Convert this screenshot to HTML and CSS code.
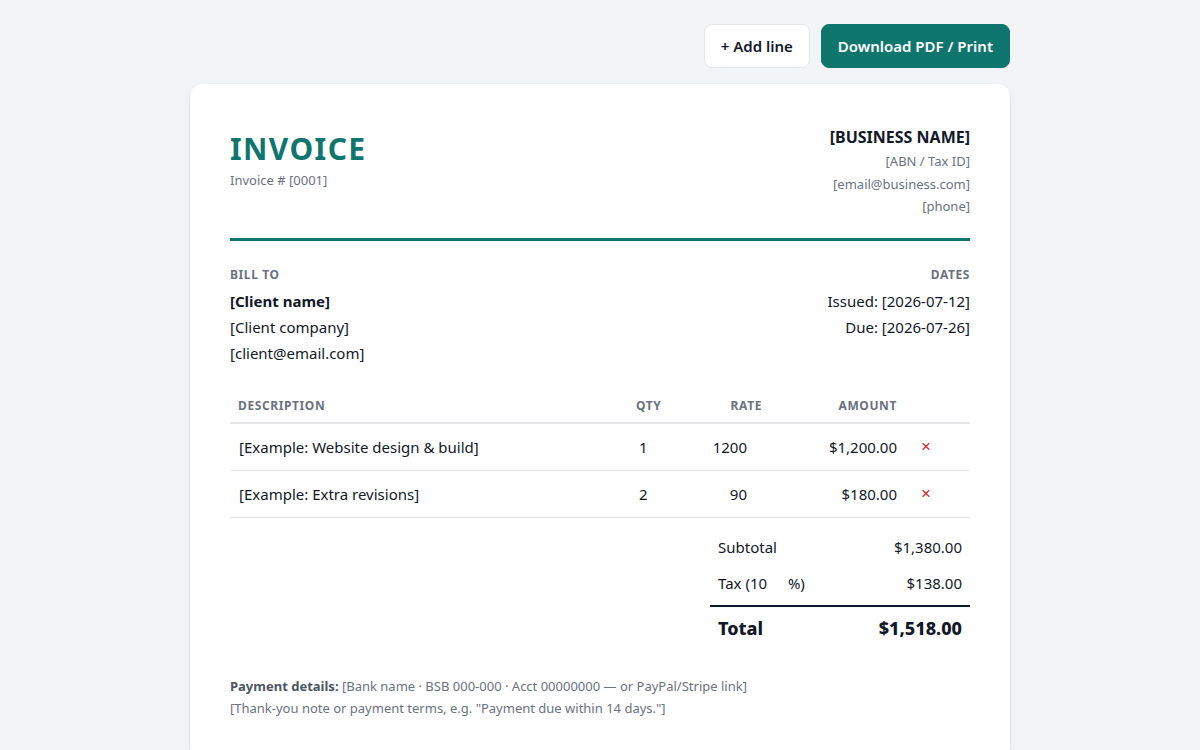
FILE: index.html
```html
<!DOCTYPE html>
<html lang="en">
<head>
    <meta charset="UTF-8">
    <meta name="viewport" content="width=device-width, initial-scale=1.0">
    <title>Invoice</title>
    <link rel="stylesheet" href="styles.css">
</head>
<body>

<div class="toolbar">
    <button class="btn btn-light">+ Add line</button>
    <button class="btn btn-primary">Download PDF / Print</button>
</div>

<div class="invoice">
    <!-- 上部ヘッダー -->
    <div class="invoice-head">
        <div>
            <h1 class="invoice-title">INVOICE</h1>
            <div class="invoice-number">Invoice # [0001]</div>
        </div>
        <div class="business">
            <div class="business-name">[BUSINESS NAME]</div>
            <div class="meta">[ABN / Tax ID]</div>
            <div class="meta">[email@business.com]</div>
            <div class="meta">[phone]</div>
        </div>
    </div>

    <div class="parties">
        <div>
            <div class="label">Bill to</div>
            <div class="party-line strong">[Client name]</div>
            <div class="party-line">[Client company]</div>
            <div class="party-line">[client@email.com]</div>
        </div>
        <div class="dates">
            <div class="label">Dates</div>
            <div class="party-line">Issued: [2026-07-12]</div>
            <div class="party-line">Due: [2026-07-26]</div>
        </div>
    </div>

    <table class="lines">
        <thead>
            <tr>
                <th class="col-desc">Description</th>
                <th class="col-qty">Qty</th>
                <th class="col-rate">Rate</th>
                <th class="col-amount">Amount</th>
                <th class="col-del"></th>
            </tr>
        </thead>
        <tbody>
            <tr>
                <td class="col-desc"><input class="cell-input" type="text" value="[Example: Website design &amp; build]"></td>
                <td class="col-qty"><input class="cell-input qty-input" type="text" value="1"></td>
                <td class="col-rate"><input class="cell-input rate-input" type="text" value="1200"></td>
                <td class="col-amount">$1,200.00</td>
                <td class="col-del"><button class="del">&times;</button></td>
            </tr>
            <tr>
                <td class="col-desc"><input class="cell-input" type="text" value="[Example: Extra revisions]"></td>
                <td class="col-qty"><input class="cell-input qty-input" type="text" value="2"></td>
                <td class="col-rate"><input class="cell-input rate-input" type="text" value="90"></td>
                <td class="col-amount">$180.00</td>
                <td class="col-del"><button class="del">&times;</button></td>
            </tr>
        </tbody>
    </table>

    <div class="totals">
        <div class="total-row">
            <span>Subtotal</span>
            <span>$1,380.00</span>
        </div>
        <div class="total-row tax-row">
            <span>Tax (<input class="tax-input" type="text" value="10">%)</span>
            <span>$138.00</span>
        </div>
        <div class="total-row grand">
            <span>Total</span>
            <span>$1,518.00</span>
        </div>
    </div>

    <div class="notes">
        <p><b>Payment details:</b> [Bank name · BSB 000-000 · Acct 00000000 — or PayPal/Stripe link]</p>
        <p>[Thank-you note or payment terms, e.g. "Payment due within 14 days."]</p>
    </div>
</div>

</body>
</html>
```

FILE: styles.css
```css
/* ページ全体 */
body {
    margin: 0;
    padding: 24px 0;
    background: #f3f4f6;
    color: #111827;
    font-family: "Noto Sans", "Open Sans", sans-serif;
    font-size: 15px;
}

/* 上のボタン */
.toolbar {
    width: 820px;
    margin: 0 auto 16px;
    display: flex;
    justify-content: flex-end;
    gap: 11px;
}

.btn {
    font-family: inherit;
    font-size: 15px;
    font-weight: 600;
    line-height: 20px;
    padding: 11px 16px;
    border-radius: 8px;
    cursor: pointer;
}

.btn-light {
    background: #fff;
    color: #111827;
    border: 1px solid #e5e7eb;
}

.btn-primary {
    background: #0f766e;
    color: #fff;
    border: 1px solid #0f766e;
}

/* 請求書カード */
.invoice {
    width: 820px;
    box-sizing: border-box;
    margin: 0 auto;
    padding: 40px;
    background: #fff;
    border-radius: 12px;
    box-shadow: 0 1px 3px rgba(0, 0, 0, 0.08), 0 4px 12px rgba(0, 0, 0, 0.04);
}

.invoice-head {
    display: flex;
    justify-content: space-between;
    padding-bottom: 20px;
    border-bottom: 3px solid #0f766e;
}

.invoice-title {
    margin: 7px 0 0;
    font-size: 30px;
    line-height: 36px;
    letter-spacing: 1.4px;
    font-weight: 700;
    color: #0f766e;
}

.invoice-number {
    font-size: 13px;
    color: #6b7280;
    margin-top: 4px;
}

.business {
    text-align: right;
}

.business-name {
    font-size: 16px;
    font-weight: 700;
    line-height: 26px;
}

.meta {
    font-size: 13px;
    line-height: 22.5px;
    color: #6b7280;
}

/* 請求先と日付 */
.parties {
    display: flex;
    justify-content: space-between;
    margin-top: 26px;
}

.dates {
    text-align: right;
}

.label {
    font-size: 12px;
    line-height: 16px;
    font-weight: 700;
    letter-spacing: 0.6px;
    text-transform: uppercase;
    color: #6b7280;
    margin-bottom: 5px;
}

.party-line {
    line-height: 26px;
}

.strong {
    font-weight: 700;
}

/* 明細テーブル */
.lines {
    width: 100%;
    margin-top: 23px;
    border-collapse: collapse;
}

.lines th {
    font-size: 12px;
    line-height: 16px;
    font-weight: 700;
    letter-spacing: 0.6px;
    text-transform: uppercase;
    color: #6b7280;
    padding: 9px 8px 8px;
    text-align: left;
    border-bottom: 2px solid #e5e7eb;
}

.lines td {
    padding: 7px 8px;
    border-bottom: 1px solid #e5e7eb;
}

.col-qty { width: 46px; }
.col-rate { width: 64px; text-align: right !important; }
.col-amount { width: 119px; text-align: right !important; }
.col-del { width: 49px; }

.cell-input {
    width: 100%;
    box-sizing: border-box;
    height: 32px;
    padding: 0;
    border: 1px solid transparent;
    border-radius: 4px;
    background: transparent;
    font-family: inherit;
    font-size: 15px;
    color: #111827;
}

.qty-input {
    padding-left: 2px;
}

.rate-input {
    text-align: right;
    padding-right: 14px;
}

.del {
    border: none;
    background: none;
    color: #dc2626;
    font-size: 17px;
    padding: 0 0 0 8px;
    cursor: pointer;
}

/* 合計 */
.totals {
    width: 260px;
    margin: 11px 0 0 auto;
}

.total-row {
    display: flex;
    justify-content: space-between;
    padding: 8px 8px;
    line-height: 20px;
}

.tax-row {
    padding-bottom: 12px;
}

.tax-input {
    width: 38px;
    margin: 0;
    padding: 0;
    border: none;
    background: transparent;
    font-family: inherit;
    font-size: 15px;
    color: #111827;
}

.grand {
    padding: 10px 8px;
    line-height: 22px;
    border-top: 2px solid #111827;
    font-size: 18px;
    font-weight: 800;
}

/* 支払い情報 */
.notes {
    margin-top: 26px;
    font-size: 13px;
    line-height: 22px;
    color: #6b7280;
}

.notes p {
    margin: 0;
}

.notes b {
    color: #4b5563;
}
```
